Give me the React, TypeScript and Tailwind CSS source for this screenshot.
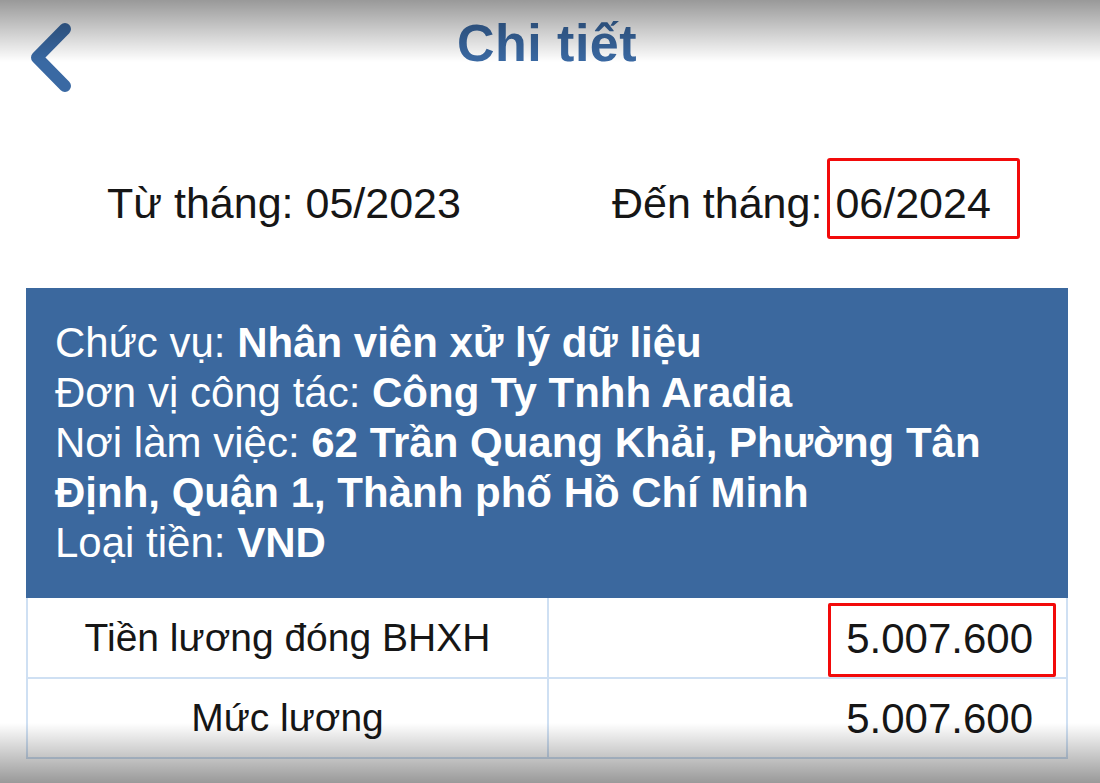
const font = { fontFamily: '"Liberation Sans", Arial, sans-serif' };

function Chevron() {
  return (
    <svg width="50" height="72" viewBox="0 0 50 72" className="text-[#3a69a3]">
      <path
        d="M37 6 L9 34.5 L37 63"
        fill="none"
        stroke="currentColor"
        strokeWidth="12"
        strokeLinecap="round"
        strokeLinejoin="round"
      />
    </svg>
  );
}

export default function App() {
  return (
    <div
      className="relative h-[783px] w-[1100px] overflow-hidden bg-white text-[#161616]"
      style={font}
    >
      {/* header */}
      <div className="relative flex h-[86px] items-center justify-center">
        <div className="absolute left-[28px] top-[23px]">
          <Chevron />
        </div>
        <h1 className="ml-[-6px] text-[52px] font-bold leading-none tracking-[0.5px] text-[#3a69a3]">
          Chi tiết
        </h1>
      </div>

      {/* period */}
      <div className="mt-[72px] flex h-[81px] items-center pl-[107px] text-[43px] leading-[50px]">
        <span className="mt-[9px] w-[505px]">Từ tháng: 05/2023</span>
        <span className="mt-[9px]">Đến tháng:</span>
        <span className="ml-[5px] flex h-[81px] w-[193px] items-center rounded-[3px] border-[3px] border-[#f20a0a] pl-[5px] pt-[9px]">
          06/2024
        </span>
      </div>

      {/* info panel */}
      <div className="mx-[26px] mt-[49px] w-[1042px]">
        <div className="bg-[#3b689e] pb-[30px] pl-[29px] pr-[20px] pt-[30px] text-[42px] leading-[50px] text-white">
          <p>
            Chức vụ: <b>Nhân viên xử lý dữ liệu</b>
          </p>
          <p>
            Đơn vị công tác: <b>Công Ty Tnhh Aradia</b>
          </p>
          <p>
            Nơi làm việc: <b>62 Trần Quang Khải, Phường Tân</b>
          </p>
          <p className="font-bold">Định, Quận 1, Thành phố Hồ Chí Minh</p>
          <p>
            Loại tiền: <b>VND</b>
          </p>
        </div>

        <table className="w-full border-collapse">
          <tbody>
            <tr className="h-[80px]">
              <td className="w-[521px] border-2 border-t-0 border-[#cfe0f3] pt-[2px] text-center text-[39px]">
                Tiền lương đóng BHXH
              </td>
              <td className="relative border-2 border-t-0 border-[#cfe0f3] pr-[33px] pt-[2px] text-right text-[42px]">
                5.007.600
                <span className="absolute left-[279px] top-[5px] h-[74px] w-[228px] rounded-[2px] border-[3px] border-[#f20a0a]" />
              </td>
            </tr>
            <tr className="h-[80px]">
              <td className="border-2 border-[#cfe0f3] text-center text-[39px]">Mức lương</td>
              <td className="border-2 border-[#cfe0f3] pr-[33px] text-right text-[42px]">5.007.600</td>
            </tr>
          </tbody>
        </table>
      </div>

      {/* video vignette */}
      <div className="pointer-events-none absolute inset-x-0 top-0 h-[62px] bg-gradient-to-b from-black/40 to-transparent" />
      <div className="pointer-events-none absolute inset-x-0 bottom-0 h-[60px] bg-gradient-to-t from-black/40 to-transparent" />
    </div>
  );
}
